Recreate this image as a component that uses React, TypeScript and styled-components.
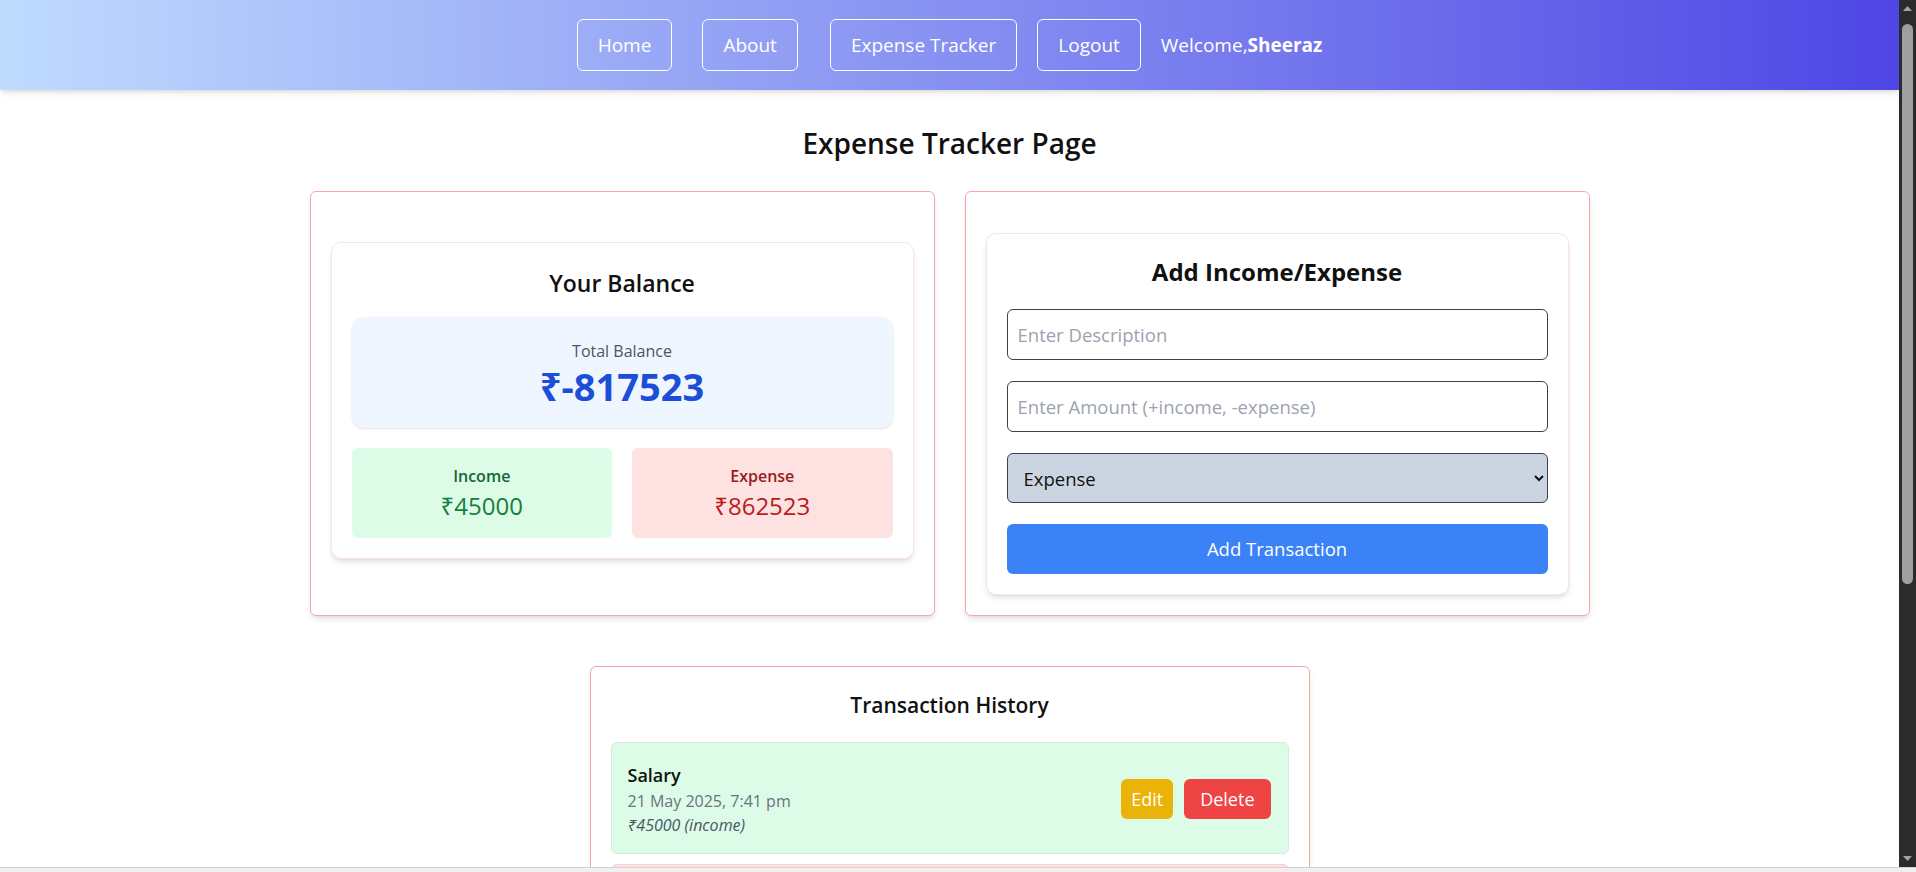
import React from "react";
import styled, { createGlobalStyle } from "styled-components";

const GlobalStyle = createGlobalStyle`
  * { box-sizing: border-box; }
  html, body, #root { margin: 0; padding: 0; height: 100%; background: #ffffff; }
  body {
    overflow: hidden;
    font-family: "Open Sans", "Noto Sans", "DejaVu Sans", sans-serif;
    color: #111827;
  }
`;

/* ---------- window frame (page viewport + drawn scrollbar + bottom edge) ---------- */

const Frame = styled.div`
  display: flex;
  flex-direction: column;
  height: 100vh;
`;

const Viewport = styled.div`
  flex: 1;
  min-height: 0;
  display: flex;
`;

const Page = styled.div`
  flex: 1;
  min-width: 0;
  overflow: hidden;
`;

const ScrollRail = styled.div`
  width: 17px;
  flex: none;
  display: flex;
  flex-direction: column;
  background: #2b2b2b;
`;

const RailArrow = styled.div`
  height: 17px;
  flex: none;
  display: flex;
  align-items: center;
  justify-content: center;
`;

const RailTrack = styled.div`
  flex: 1;
  padding: 7px 3px 0;
`;

const RailThumb = styled.div`
  height: 560px;
  border-radius: 6px;
  background: #9f9f9f;
`;

const BottomEdge = styled.div`
  height: 5px;
  flex: none;
  background: #f0f0f0;
  border-top: 1px solid #d2d2d2;
`;

/* ---------- nav ---------- */

const Nav = styled.nav`
  display: flex;
  align-items: center;
  justify-content: center;
  gap: 20px;
  height: 90px;
  background: linear-gradient(to right, #bfdbfe, #4f46e5);
  box-shadow: 0 4px 6px -1px rgba(0, 0, 0, 0.1), 0 2px 4px -2px rgba(0, 0, 0, 0.1);
`;

const NavLink = styled.a<{ $after?: number }>`
  display: block;
  padding: 12px 20px;
  margin-right: ${(p) => p.$after ?? 0}px;
  border: 1px solid #ffffff;
  border-radius: 6px;
  color: #ffffff;
  font-size: 19px;
  line-height: 26px;
  text-decoration: none;
  cursor: pointer;
`;

const Welcome = styled.span`
  color: #ffffff;
  font-size: 19px;
  line-height: 28px;

  b {
    font-weight: 700;
  }
`;

/* ---------- main ---------- */

const Main = styled.main`
  padding-bottom: 44px;
`;

const PageTitle = styled.h1`
  margin: 35px 0 30px;
  text-align: center;
  font-size: 28px;
  line-height: 36px;
  font-weight: 600;
  color: #111111;
`;

const TopGrid = styled.div`
  display: grid;
  grid-template-columns: 1fr 1fr;
  gap: 30px;
  width: 1280px;
  margin: 0 auto;
`;

const OuterCard = styled.section<{ $center?: boolean }>`
  display: flex;
  flex-direction: column;
  justify-content: ${(p) => (p.$center ? "center" : "flex-start")};
  padding: 20px;
  border: 1px solid #fca5a5;
  border-radius: 6px;
  background: #ffffff;
  box-shadow: 0 4px 6px -1px rgba(0, 0, 0, 0.1), 0 2px 4px -2px rgba(0, 0, 0, 0.08);
`;

const InnerCard = styled.div<{ $top?: number; $bottom?: number }>`
  margin-top: ${(p) => p.$top ?? 0}px;
  margin-bottom: ${(p) => p.$bottom ?? 0}px;
  padding: 24px 20px 20px;
  border: 1px solid #fee2e2;
  border-radius: 10px;
  background: #ffffff;
  box-shadow: 0 4px 6px -1px rgba(0, 0, 0, 0.1), 0 2px 4px -2px rgba(0, 0, 0, 0.08);
`;

const FormCard = styled(InnerCard)`
  padding: 22px 20px 20px;
  display: flex;
  flex-direction: column;
  gap: 21px;
`;

const CardTitle = styled.h2<{ $weight?: number }>`
  margin: 0 0 18px;
  text-align: center;
  font-size: 23px;
  line-height: 32px;
  font-weight: ${(p) => p.$weight ?? 600};
  color: #111111;
`;

const FormTitle = styled(CardTitle)`
  margin: 0;
  font-size: 24px;
`;

const TotalBox = styled.div`
  padding: 22px 24px;
  border-radius: 12px;
  background: #eff6ff;
  box-shadow: 0 1px 3px rgba(0, 0, 0, 0.1), 0 1px 2px -1px rgba(0, 0, 0, 0.08);
  text-align: center;
`;

const TotalLabel = styled.div`
  font-size: 16px;
  line-height: 24px;
  color: #4b5563;
`;

const TotalValue = styled.div`
  margin-top: 3px;
  font-size: 38px;
  line-height: 40px;
  font-weight: 700;
  color: #1d4ed8;
`;

const StatRow = styled.div`
  display: grid;
  grid-template-columns: 1fr 1fr;
  gap: 20px;
  margin-top: 20px;
`;

const StatBox = styled.div<{ $kind: "income" | "expense" }>`
  padding: 16px;
  border-radius: 6px;
  text-align: center;
  background: ${(p) => (p.$kind === "income" ? "#dcfce7" : "#fee2e2")};
`;

const StatLabel = styled.div<{ $kind: "income" | "expense" }>`
  font-size: 16px;
  line-height: 24px;
  font-weight: 600;
  color: ${(p) => (p.$kind === "income" ? "#166534" : "#991b1b")};
`;

const StatValue = styled.div<{ $kind: "income" | "expense" }>`
  margin-top: 2px;
  font-size: 24px;
  line-height: 32px;
  color: ${(p) => (p.$kind === "income" ? "#15803d" : "#b91c1c")};
`;

const TextInput = styled.input`
  display: block;
  width: 100%;
  padding: 12px 10px;
  border: 1px solid #374151;
  border-radius: 6px;
  font-family: inherit;
  font-size: 18.5px;
  line-height: 25px;
  color: #111827;
  background: #ffffff;
  outline: none;

  &::placeholder {
    color: #9ca3af;
  }
`;

const Select = styled.select`
  display: block;
  width: 100%;
  height: 50px;
  padding: 0 8px 0 12px;
  border: 1px solid #374151;
  border-radius: 6px;
  font-family: inherit;
  font-size: 18.5px;
  color: #111111;
  background-color: #cbd5e1;
  outline: none;
`;

const PrimaryButton = styled.button`
  display: block;
  width: 100%;
  padding: 11px 16px;
  border: none;
  border-radius: 6px;
  background: #3b82f6;
  color: #ffffff;
  font-family: inherit;
  font-size: 18.5px;
  line-height: 28px;
  cursor: pointer;
`;

/* ---------- history ---------- */

const HistoryCard = styled.section`
  width: 720px;
  margin: 50px auto 0;
  padding: 24px 20px 20px;
  border: 1px solid #fca5a5;
  border-radius: 6px;
  background: #ffffff;
  box-shadow: 0 4px 6px -1px rgba(0, 0, 0, 0.1), 0 2px 4px -2px rgba(0, 0, 0, 0.08);
`;

const HistoryTitle = styled.h3`
  margin: 0 0 23px;
  text-align: center;
  font-size: 21px;
  line-height: 28px;
  font-weight: 600;
  color: #111111;
`;

const TxList = styled.ul`
  list-style: none;
  margin: 0;
  padding: 0;
  display: flex;
  flex-direction: column;
  gap: 10px;
`;

const TxItem = styled.li<{ $kind: "income" | "expense" }>`
  display: flex;
  align-items: center;
  justify-content: space-between;
  padding: 18px 17px 16px 16px;
  border-radius: 6px;
  border: 1px solid ${(p) => (p.$kind === "income" ? "#cdeed8" : "#f9d0d0")};
  background: ${(p) => (p.$kind === "income" ? "#dcfce7" : "#fee2e2")};
`;

const TxInfo = styled.div`
  display: flex;
  flex-direction: column;
`;

const TxName = styled.div`
  font-size: 18px;
  line-height: 28px;
  font-weight: 600;
  color: #111111;
`;

const TxDate = styled.div`
  font-size: 16px;
  line-height: 24px;
  color: #6b7280;
`;

const TxAmount = styled.div`
  font-size: 16px;
  line-height: 24px;
  font-style: italic;
  color: #4b5563;
`;

const TxActions = styled.div`
  display: flex;
  gap: 11px;
`;

const SmallButton = styled.button<{ $variant: "edit" | "delete" }>`
  padding: 6px ${(p) => (p.$variant === "edit" ? 10 : 16)}px;
  border: none;
  border-radius: 6px;
  background: ${(p) => (p.$variant === "edit" ? "#eab308" : "#ef4444")};
  color: #ffffff;
  font-family: inherit;
  font-size: 18px;
  line-height: 28px;
  cursor: pointer;
`;

type Tx = { name: string; date: string; amount: number; kind: "income" | "expense" };

const transactions: Tx[] = [
  { name: "Salary", date: "21 May 2025, 7:41 pm", amount: 45000, kind: "income" },
  { name: "Car", date: "21 May 2025, 7:43 pm", amount: 850000, kind: "expense" },
  { name: "Rent", date: "21 May 2025, 7:44 pm", amount: 12000, kind: "expense" },
  { name: "Groceries", date: "21 May 2025, 7:46 pm", amount: 523, kind: "expense" },
];

const Arrow = ({ up }: { up?: boolean }) => (
  <svg width="9" height="5" viewBox="0 0 9 5">
    <polygon points={up ? "0,5 4.5,0 9,5" : "0,0 4.5,5 9,0"} fill="#a3a3a3" />
  </svg>
);

export default function App() {
  const income = transactions.filter((t) => t.kind === "income").reduce((s, t) => s + t.amount, 0);
  const expense = transactions.filter((t) => t.kind === "expense").reduce((s, t) => s + t.amount, 0);
  const balance = income - expense;

  return (
    <>
      <GlobalStyle />
      <Frame>
        <Viewport>
          <Page>
            <Nav>
              <NavLink $after={10}>Home</NavLink>
              <NavLink $after={12}>About</NavLink>
              <NavLink>Expense Tracker</NavLink>
              <NavLink>Logout</NavLink>
              <Welcome>
                Welcome,<b>Sheeraz</b>
              </Welcome>
            </Nav>
            <Main>
              <PageTitle>Expense Tracker Page</PageTitle>
              <TopGrid>
                <OuterCard $center>
                  <InnerCard $bottom={6}>
                    <CardTitle>Your Balance</CardTitle>
                    <TotalBox>
                      <TotalLabel>Total Balance</TotalLabel>
                      <TotalValue>₹{balance}</TotalValue>
                    </TotalBox>
                    <StatRow>
                      <StatBox $kind="income">
                        <StatLabel $kind="income">Income</StatLabel>
                        <StatValue $kind="income">₹{income}</StatValue>
                      </StatBox>
                      <StatBox $kind="expense">
                        <StatLabel $kind="expense">Expense</StatLabel>
                        <StatValue $kind="expense">₹{expense}</StatValue>
                      </StatBox>
                    </StatRow>
                  </InnerCard>
                </OuterCard>
                <OuterCard>
                  <FormCard $top={21}>
                    <FormTitle $weight={700}>Add Income/Expense</FormTitle>
                    <TextInput placeholder="Enter Description" />
                    <TextInput placeholder="Enter Amount (+income, -expense)" />
                    <Select defaultValue="expense">
                      <option value="income">Income</option>
                      <option value="expense">Expense</option>
                    </Select>
                    <PrimaryButton>Add Transaction</PrimaryButton>
                  </FormCard>
                </OuterCard>
              </TopGrid>
              <HistoryCard>
                <HistoryTitle>Transaction History</HistoryTitle>
                <TxList>
                  {transactions.map((t) => (
                    <TxItem key={t.name} $kind={t.kind}>
                      <TxInfo>
                        <TxName>{t.name}</TxName>
                        <TxDate>{t.date}</TxDate>
                        <TxAmount>
                          ₹{t.amount} ({t.kind})
                        </TxAmount>
                      </TxInfo>
                      <TxActions>
                        <SmallButton $variant="edit">Edit</SmallButton>
                        <SmallButton $variant="delete">Delete</SmallButton>
                      </TxActions>
                    </TxItem>
                  ))}
                </TxList>
              </HistoryCard>
            </Main>
          </Page>
          <ScrollRail>
            <RailArrow>
              <Arrow up />
            </RailArrow>
            <RailTrack>
              <RailThumb />
            </RailTrack>
            <RailArrow>
              <Arrow />
            </RailArrow>
          </ScrollRail>
        </Viewport>
        <BottomEdge />
      </Frame>
    </>
  );
}
